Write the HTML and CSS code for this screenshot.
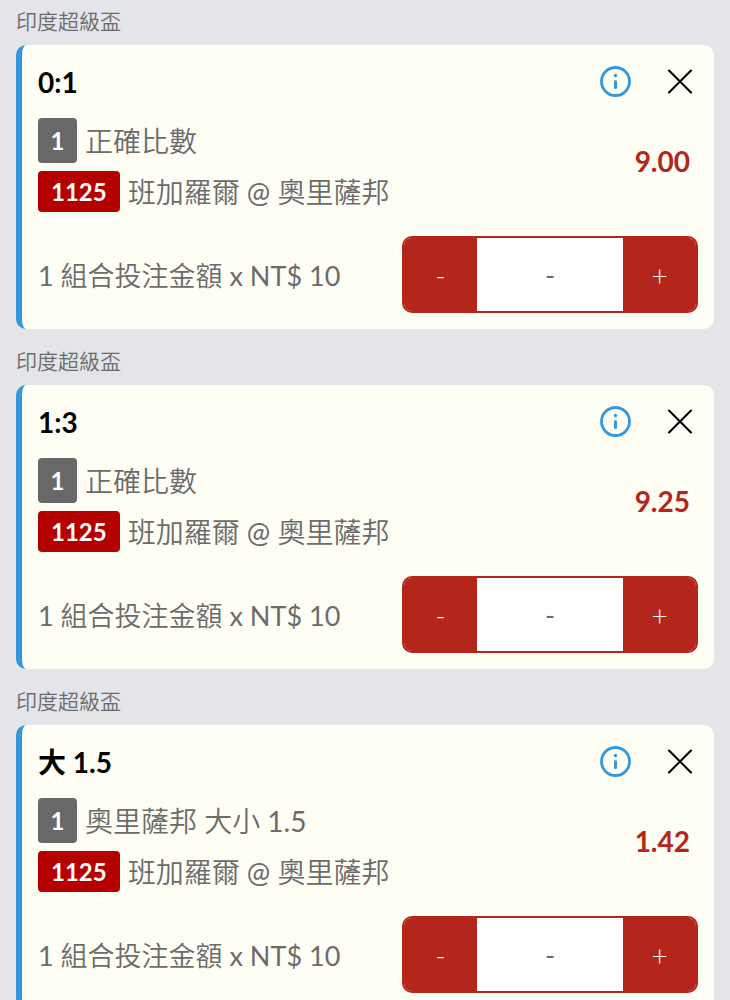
FILE: index.html
```html
<!DOCTYPE html>
<html lang="zh-Hant">
<head>
<meta charset="utf-8">
<meta name="viewport" content="width=device-width, initial-scale=1">
<title>投注單</title>
<link rel="stylesheet" href="styles.css">
</head>
<body>
<svg class="sprite" aria-hidden="true">
  <symbol id="icon-info" viewBox="0 0 32 32">
    <circle cx="15.5" cy="15.5" r="14" fill="none" stroke="currentColor" stroke-width="2.8"/>
    <circle cx="15.5" cy="9.5" r="1.7" fill="currentColor"/>
    <path d="M15.5 15.5v6" fill="none" stroke="currentColor" stroke-width="3" stroke-linecap="round"/>
  </symbol>
  <symbol id="icon-close" viewBox="0 0 32 32">
    <path d="M5 4.5l22 22M27 4.5l-22 22" fill="none" stroke="currentColor" stroke-width="2.1" stroke-linecap="round"/>
  </symbol>
</svg>
<main class="slip">
  <section class="bet">
    <h2 class="league">印度超級盃</h2>
    <article class="card">
      <header class="head">
        <h3 class="pick">0:1</h3>
        <button class="icon-btn info" type="button" aria-label="資訊"><svg class="icon"><use href="#icon-info"/></svg></button>
        <button class="icon-btn" type="button" aria-label="移除"><svg class="icon"><use href="#icon-close"/></svg></button>
      </header>
      <div class="detail">
        <div class="lines">
          <p class="line"><span class="badge index">1</span>正確比數</p>
          <p class="line"><span class="badge code">1125</span>班加羅爾 @ 奧里薩邦</p>
        </div>
        <strong class="odds">9.00</strong>
      </div>
      <div class="stake">
        <label for="stake-1">1 組合投注金額 x NT$ 10</label>
        <div class="stepper">
          <button type="button" aria-label="減少">-</button>
          <input id="stake-1" type="text" inputmode="numeric" placeholder="-">
          <button type="button" aria-label="增加">+</button>
        </div>
      </div>
    </article>
  </section>
  <section class="bet">
    <h2 class="league">印度超級盃</h2>
    <article class="card">
      <header class="head">
        <h3 class="pick">1:3</h3>
        <button class="icon-btn info" type="button" aria-label="資訊"><svg class="icon"><use href="#icon-info"/></svg></button>
        <button class="icon-btn" type="button" aria-label="移除"><svg class="icon"><use href="#icon-close"/></svg></button>
      </header>
      <div class="detail">
        <div class="lines">
          <p class="line"><span class="badge index">1</span>正確比數</p>
          <p class="line"><span class="badge code">1125</span>班加羅爾 @ 奧里薩邦</p>
        </div>
        <strong class="odds">9.25</strong>
      </div>
      <div class="stake">
        <label for="stake-2">1 組合投注金額 x NT$ 10</label>
        <div class="stepper">
          <button type="button" aria-label="減少">-</button>
          <input id="stake-2" type="text" inputmode="numeric" placeholder="-">
          <button type="button" aria-label="增加">+</button>
        </div>
      </div>
    </article>
  </section>
  <section class="bet">
    <h2 class="league">印度超級盃</h2>
    <article class="card">
      <header class="head">
        <h3 class="pick">大 1.5</h3>
        <button class="icon-btn info" type="button" aria-label="資訊"><svg class="icon"><use href="#icon-info"/></svg></button>
        <button class="icon-btn" type="button" aria-label="移除"><svg class="icon"><use href="#icon-close"/></svg></button>
      </header>
      <div class="detail">
        <div class="lines">
          <p class="line"><span class="badge index">1</span>奧里薩邦 大小 1.5</p>
          <p class="line"><span class="badge code">1125</span>班加羅爾 @ 奧里薩邦</p>
        </div>
        <strong class="odds">1.42</strong>
      </div>
      <div class="stake">
        <label for="stake-3">1 組合投注金額 x NT$ 10</label>
        <div class="stepper">
          <button type="button" aria-label="減少">-</button>
          <input id="stake-3" type="text" inputmode="numeric" placeholder="-">
          <button type="button" aria-label="增加">+</button>
        </div>
      </div>
    </article>
  </section>
</main>
</body>
</html>
```
FILE: styles.css
```css
* {
  box-sizing: border-box;
}

body {
  margin: 0;
  background: #e3e5e8;
  color: #6b6b6b;
  font-family: Lato, "Noto Sans CJK TC DemiLight", "Noto Sans CJK TC", sans-serif;
  font-size: 27px;
}

h2, h3, p {
  margin: 0;
}

.sprite {
  display: none;
}

.slip {
  padding: 0 16px;
}

.league {
  padding: 6px 0 10px;
  font-size: 21px;
  font-weight: 400;
  line-height: 29px;
}

.bet + .bet .league {
  padding-top: 17px;
}

.card {
  padding: 20px 16px 16px;
  border-left: 6px solid #3498db;
  border-radius: 10px;
  background: #fffef5;
}

.head {
  display: flex;
  align-items: center;
  gap: 32px;
  height: 34px;
  padding-right: 2px;
}

.pick {
  flex: 1;
  color: #000;
  font-family: Lato, "Noto Sans CJK TC", sans-serif;
  font-size: 28px;
  font-weight: 700;
  line-height: 34px;
}

.icon-btn {
  display: grid;
  width: 32px;
  padding: 0;
  border: 0;
  background: none;
  color: #000;
}

.info {
  color: #3498db;
}

.icon {
  width: 32px;
  height: 32px;
}

.detail {
  display: flex;
  align-items: center;
  justify-content: space-between;
  margin-top: 19px;
}

.lines {
  display: grid;
  gap: 8px;
}

.line {
  display: flex;
  align-items: center;
  gap: 8px;
  font-size: 28px;
  line-height: 40px;
}

.badge {
  padding: 0 13px;
  border-radius: 4px;
  color: #fff;
  font-size: 24px;
  font-weight: 700;
}

.index {
  min-width: 39px;
  padding: 0 12px;
  background: #686868;
  line-height: 45px;
  text-align: center;
}

.code {
  background: #b50000;
  line-height: 41px;
}

.odds {
  padding: 0 8px 8px;
  color: #b4261b;
  font-size: 28px;
}

.stake {
  display: flex;
  align-items: center;
  justify-content: space-between;
  margin-top: 24px;
}

.stepper {
  display: flex;
  width: 296px;
  height: 77px;
  overflow: hidden;
  border: 2px solid #b4261b;
  border-radius: 10px;
}

.stepper button {
  flex: 1;
  padding: 0;
  border: 0;
  background: #b4261b;
  color: #fff;
  font: inherit;
  font-size: 28px;
  font-weight: 300;
}

.stepper input {
  width: 146px;
  padding: 0;
  border: 0;
  border-radius: 0;
  background: #fff;
  color: #6b6b6b;
  font: inherit;
  text-align: center;
}

.stepper input::placeholder {
  color: #6b6b6b;
}
```
